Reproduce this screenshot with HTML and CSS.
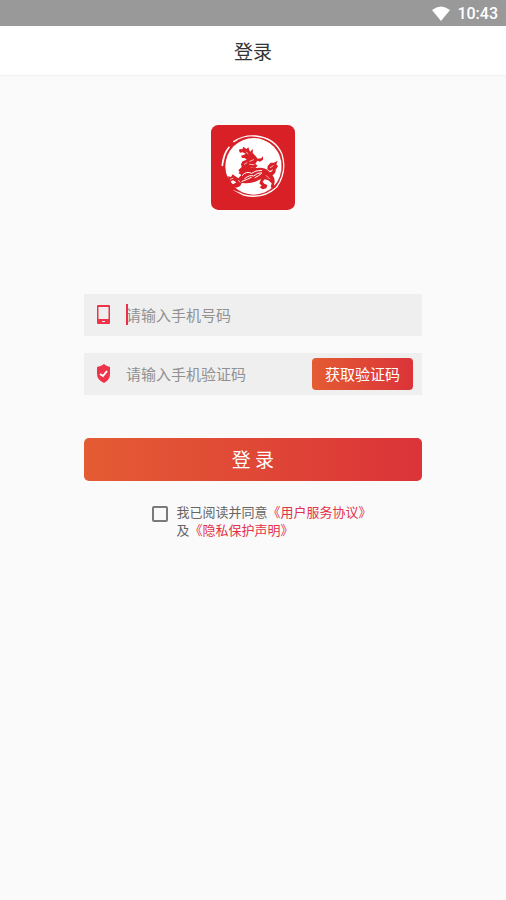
FILE: index.html
```html
<!DOCTYPE html>
<html lang="zh-CN">
  <head>
    <meta charset="UTF-8">
    <meta name="viewport" content="width=device-width, initial-scale=1.0">
    <title>登录</title>
    <link rel="stylesheet" href="styles.css">
  </head>

  <body>
    <div class="status-bar">
      <svg class="wifi" viewBox="0 0 18 15" aria-hidden="true">
        <path d="M0 4 Q9 -3 18 4 L9 15 Z"/>
      </svg>
      <span>10:43</span>
    </div>

    <header class="header">
      <h1>登录</h1>
    </header>

    <main class="login">
      <svg class="logo" viewBox="18 15 252 255" role="img" aria-label="logo">
        <rect class="logo-red" x="18" y="15" width="252" height="255" rx="22"/>
        <!-- brushed ring -->
        <circle class="logo-white" cx="146" cy="139" r="85"/>
        <path class="logo-line" stroke-width="4" d="M86 65 Q116 45 152 48 Q210 54 231 103 Q247 155 215 201 Q175 239 116 225 L87 210"/>
        <path class="logo-line" stroke-width="5" d="M72 82 Q55 103 52 136 M62 97 Q56 111 54 125"/>
        <path class="logo-cut" stroke-width="2" d="M98 60 Q118 50 140 51 M168 54 Q222 75 230 125 Q235 172 204 206"/>
        <path class="logo-red" d="M58 158 L75 181 L88 203 L105 218 L72 205 L55 184 Z"/>
        <!-- head and mane -->
        <path class="logo-red" d="M104 87 L112 88 L115 80 L124 87 L130 82 L135 95 L144 87 L143 99 L151 107 L158 116 L169 115 L174 108 L174 119 L165 125 L157 122 L151 131 L158 137 L150 145 L139 141 L131 149 L119 154 L106 158 L100 151 L110 141 L108 132 L113 124 L125 119 L119 114 L111 114 L108 107 L116 105 L122 101 L113 97 L105 98 L102 92 Z"/>
        <!-- body, legs and paws -->
        <path class="logo-red" d="M113 151 Q132 138 153 144 Q177 140 191 153 L202 165 Q213 178 207 193 L212 202 L204 206 L197 201 L200 190 L190 181 L179 178 L173 185 L178 191 L187 195 L184 205 L173 208 L164 202 L170 197 L163 190 L168 177 L154 184 Q130 193 111 188 L105 199 L93 203 L80 199 L75 190 L86 192 L94 187 L84 181 L73 187 L65 180 L71 174 L66 168 L78 171 L83 163 L91 169 L100 175 L109 165 L100 159 Z"/>
        <!-- tail -->
        <path class="logo-red" d="M190 159 Q202 156 204 148 L195 153 L187 148 L188 138 L197 128 L207 128 L218 122 L214 133 L219 139 L212 149 Q214 161 198 168 Z"/>
        <path class="logo-line" stroke-width="3" d="M112 166 Q124 152 140 160 Q150 151 170 151 M119 176 Q134 163 146 168 Q155 159 169 158 M111 184 Q129 178 139 172 M150 173 Q162 167 169 161"/>
        <path class="logo-line" stroke-width="2" d="M124 96 L129 102 M134 124 L146 119 M134 133 L147 134 M118 133 L126 128 M76 178 L84 175 M101 181 L105 187 M184 167 L194 177 M196 143 L205 137 M187 185 L192 191"/>
      </svg>

      <form class="form">
        <div class="field">
          <label for="phone" aria-label="手机号码">
            <svg class="icon" viewBox="0 0 14 20" aria-hidden="true">
              <rect class="icon-red" x="0" y="0" width="13" height="19" rx="1"/>
              <rect class="icon-hole" x="1.5" y="2" width="10" height="12"/>
              <rect class="icon-hole" x="5" y="16" width="3" height="1"/>
            </svg>
          </label>
          <div class="phone-box">
            <input id="phone" type="tel" placeholder="请输入手机号码">
          </div>
        </div>

        <div class="field">
          <label for="code" aria-label="手机验证码">
            <svg class="icon" viewBox="0 0 14 20" aria-hidden="true">
              <path class="icon-red" d="M7 0 Q9 2 13 3 V10 Q13 16 7 19 Q0 16 0 10 V3 Q5 2 7 0 Z"/>
              <path class="icon-check" d="M3 10 L6 12 L10 7"/>
            </svg>
          </label>
          <input id="code" type="text" placeholder="请输入手机验证码">
          <button class="code-button" type="button">获取验证码</button>
        </div>

        <button class="login-button" type="submit">登 录</button>

        <div class="agreement">
          <input id="agree" type="checkbox">
          <div>
            <label for="agree">我已阅读并同意</label><a href="#terms">《用户服务协议》</a><br>
            <label for="agree">及</label><a href="#privacy">《隐私保护声明》</a>
          </div>
        </div>
      </form>
    </main>
  </body>
</html>
```
FILE: styles.css
```css
* { box-sizing: border-box; }
body {
  margin: 0;
  min-height: 100vh;
  background-color: #fafafa;
  color: #333;
  font-family: "Noto Sans CJK SC", sans-serif;
}
button, input {
  font-family: inherit;
  font-size: 15px;
}
button {
  border: none;
  padding: 0 0 2px;
  color: white;
  background-image: linear-gradient(90deg, #e45c33, #db3339);
  cursor: pointer;
}
.status-bar {
  height: 26px;
  padding: 0 8px;
  display: flex;
  align-items: center;
  justify-content: flex-end;
  gap: 7px;
  background-color: #999;
  color: white;
  font-family: Roboto, sans-serif;
  font-size: 16px;
  font-weight: 500;
}
.wifi {
  width: 18px;
  height: 15px;
  fill: white;
}
.header {
  height: 50px;
  display: flex;
  align-items: center;
  justify-content: center;
  background-color: white;
  border-bottom: 1px solid #f2f2f2;
}
.header h1 {
  margin: 0;
  font-size: 19px;
  font-weight: 400;
}
.login {
  padding: 49px 84px;
  display: flex;
  flex-direction: column;
  align-items: center;
}
.logo {
  width: 84px;
  height: 85px;
}
.logo-red { fill: #d92027; }
.logo-white { fill: white; }
.logo-line {
  fill: none;
  stroke: white;
  stroke-linecap: round;
}
.logo-cut {
  fill: none;
  stroke: #d92027;
}
.form {
  width: 100%;
  margin-top: 84px;
}
.field {
  height: 42px;
  margin-bottom: 17px;
  padding: 0 9px 0 13px;
  display: flex;
  align-items: center;
  background-color: #efefef;
}
.field label {
  width: 29px;
  display: flex;
}
.field input {
  width: 100%;
  min-width: 0;
  flex: 1;
  height: 24px;
  padding: 0 0 2px;
  border: none;
  outline: none;
  background: none;
  color: #333;
}
.field input::placeholder {
  color: #919191;
  opacity: 1;
}
.phone-box {
  flex: 1;
  display: flex;
  position: relative;
}
/* text cursor */
.phone-box::before {
  content: "";
  position: absolute;
  left: 0;
  top: 1px;
  width: 2px;
  height: 21px;
  background-color: #e8304a;
}
.icon {
  width: 14px;
  height: 20px;
}
.icon-red { fill: #ee334b; }
.icon-hole { fill: #efefef; }
.icon-check {
  fill: none;
  stroke: white;
  stroke-width: 2;
}
.code-button {
  width: 101px;
  height: 32px;
  border-radius: 4px;
}
.login-button {
  width: 100%;
  height: 43px;
  margin-top: 26px;
  border-radius: 5px;
  font-size: 19px;
}
.agreement {
  margin-top: 22px;
  padding-left: 20%;
  display: flex;
  gap: 9px;
  color: #666;
  font-size: 13px;
  line-height: 18px;
}
.agreement input {
  appearance: none;
  flex: none;
  width: 16px;
  height: 16px;
  margin: 3px 0 0;
  border: 2px solid #7a7a7a;
  border-radius: 2px;
}
.agreement input:checked { background-color: #e8304a; }
.agreement a {
  color: #e2324b;
  text-decoration: none;
}
```
